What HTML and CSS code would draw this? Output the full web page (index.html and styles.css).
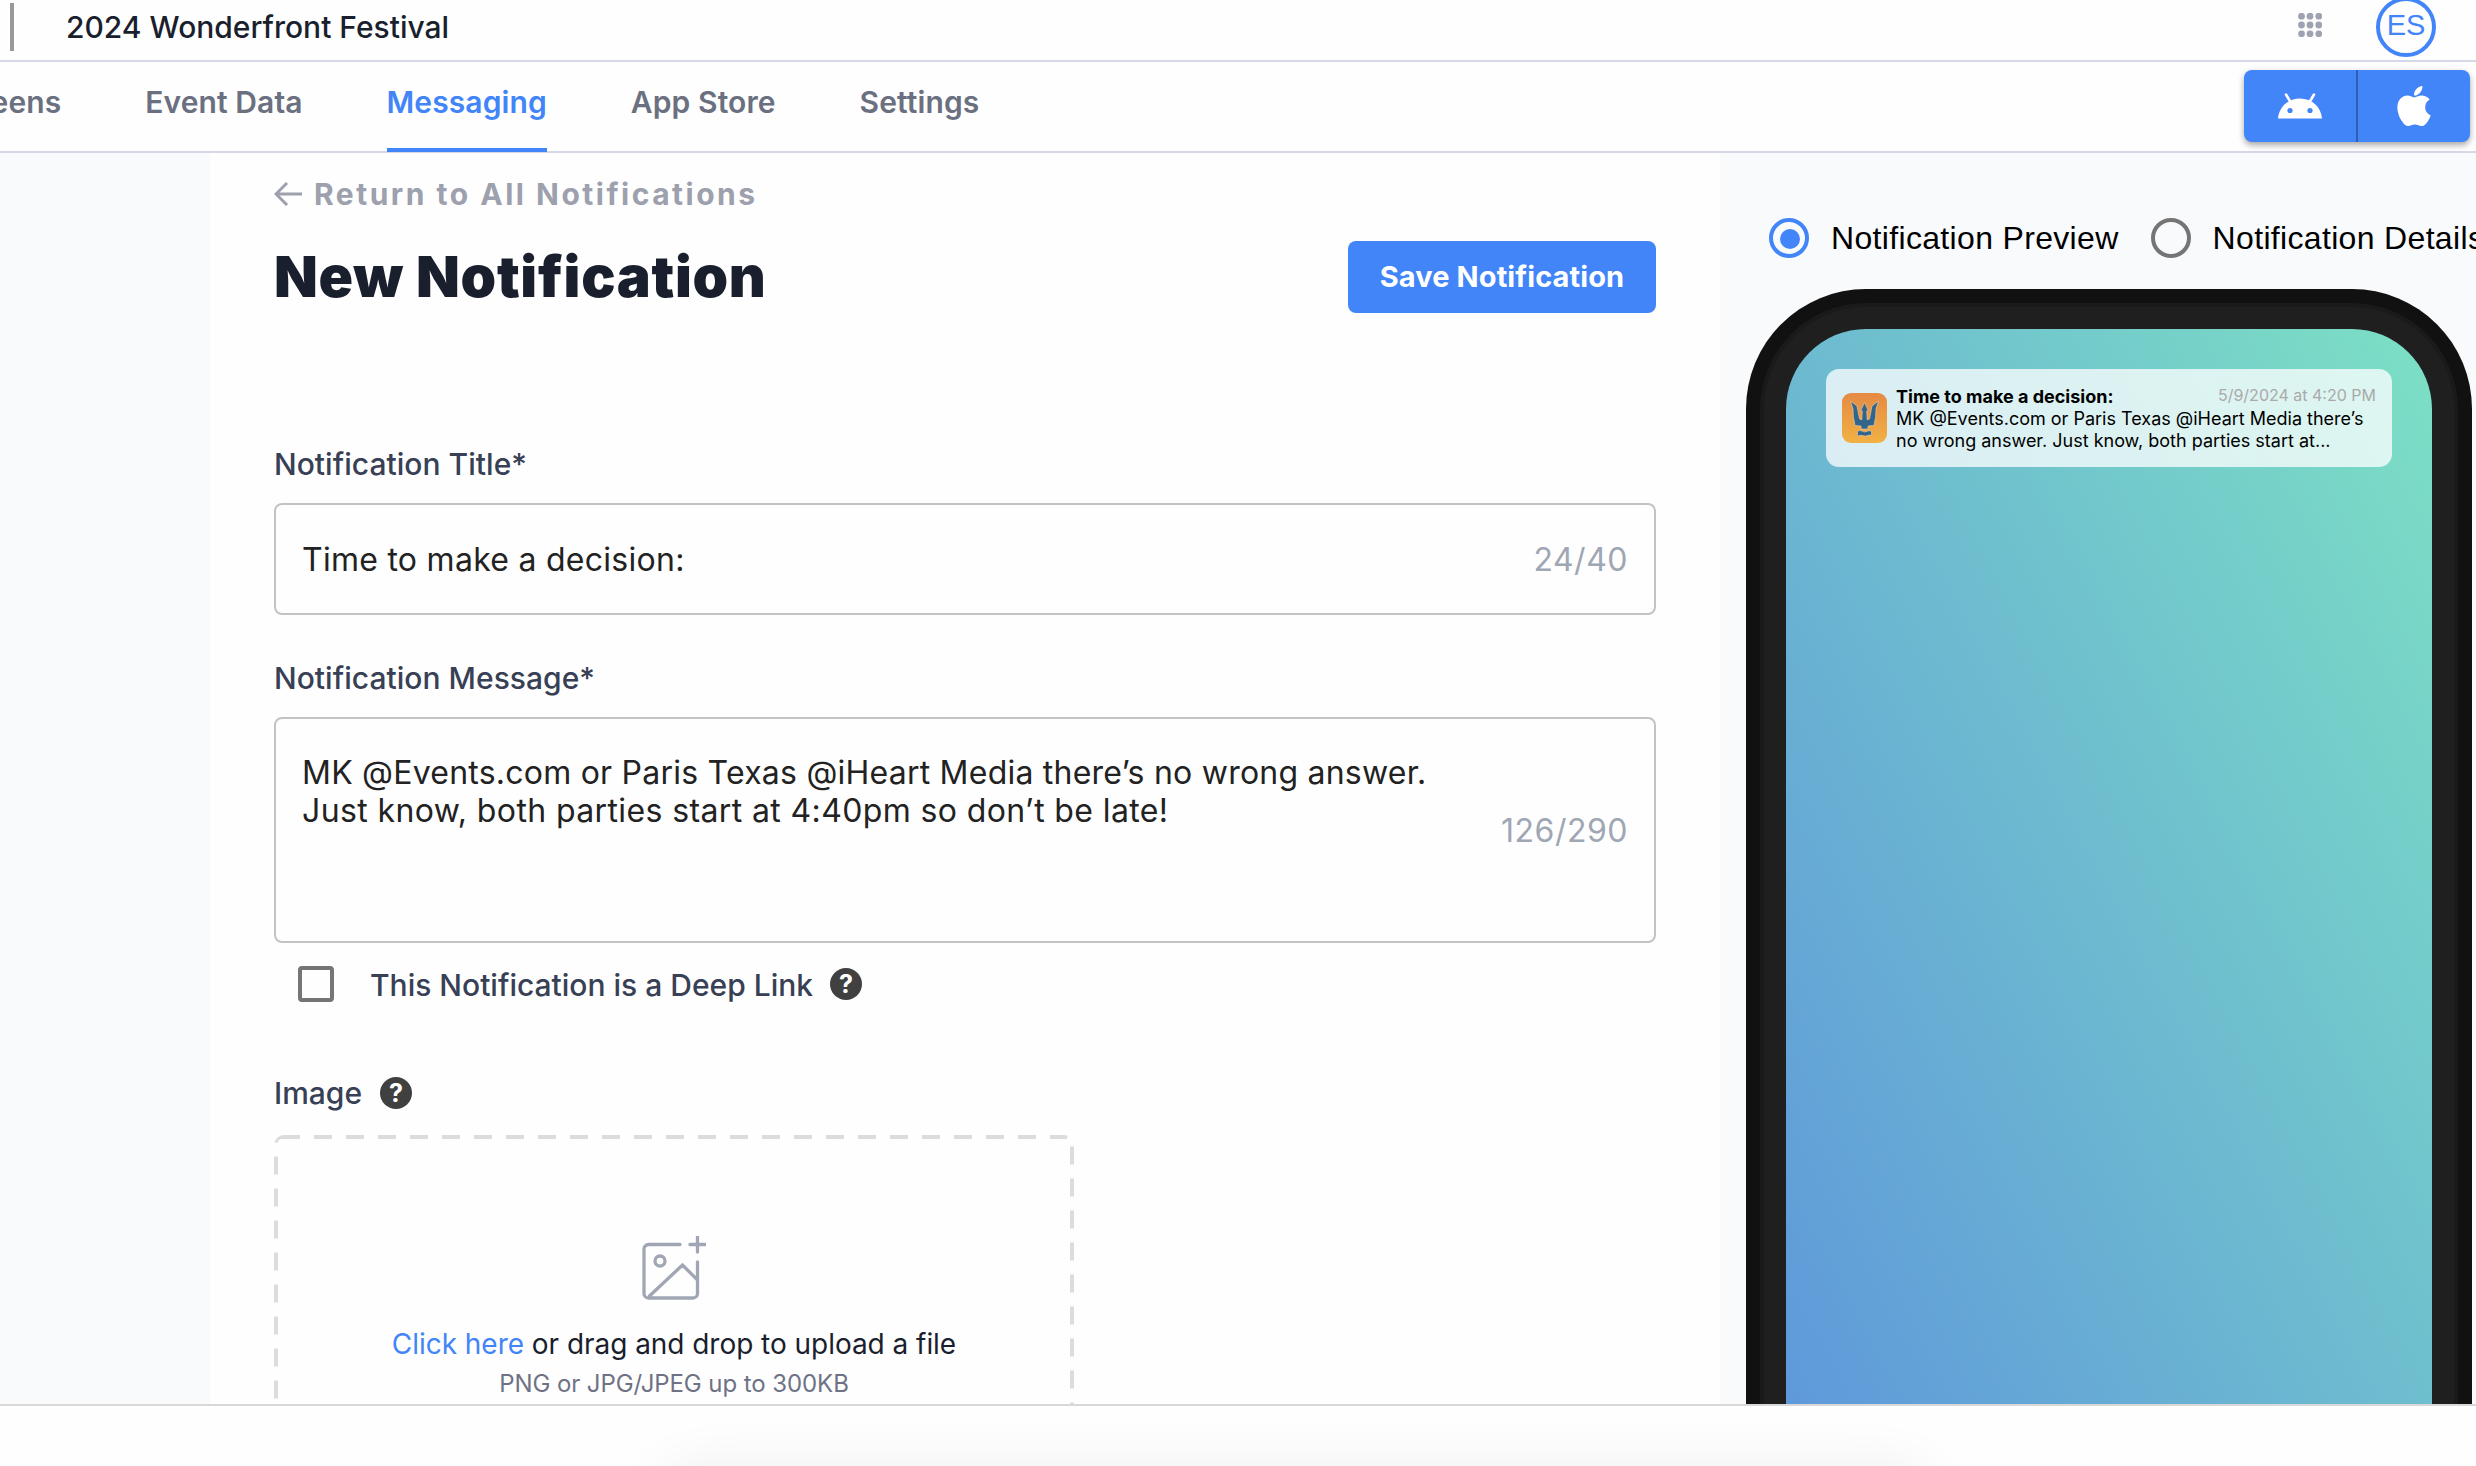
FILE: index.html
```html
<!DOCTYPE html>
<html lang="en">
<head>
    <meta charset="UTF-8">
    <meta name="viewport" content="width=device-width, initial-scale=1.0">
    <title>New Notification</title>
    <link rel="stylesheet" href="styles.css">
</head>
<body>

    <header class="topbar">
        <div class="event-name">2024 Wonderfront Festival</div>
        <div class="topbar-right">
            <svg class="apps-icon" viewBox="0 0 24 24">
                <circle cx="3.5" cy="3.2" r="3.4"/><circle cx="12" cy="3.2" r="3.4"/><circle cx="20.8" cy="3.2" r="3.4"/>
                <circle cx="3.5" cy="12" r="3.4"/><circle cx="12" cy="12" r="3.4"/><circle cx="20.8" cy="12" r="3.4"/>
                <circle cx="3.5" cy="20.8" r="3.4"/><circle cx="12" cy="20.8" r="3.4"/><circle cx="20.8" cy="20.8" r="3.4"/>
            </svg>
            <div class="avatar">ES</div>
        </div>
    </header>

    <nav class="tabs">
        <div class="tab-list">
            <a class="tab">Screens</a>
            <a class="tab">Event Data</a>
            <a class="tab active">Messaging</a>
            <a class="tab">App Store</a>
            <a class="tab">Settings</a>
        </div>
        <div class="platforms">
            <button class="platform">
                <svg class="android-icon" viewBox="0 0 44 26">
                    <path d="M8 1.5l5 8.500M36 1.500l-5 8.500" stroke="#fff" stroke-width="2.600" stroke-linecap="round"/>
                    <path d="M0 25.500C1 14 10 5.500 22 5.500S43 14 44 25.500z" fill="#fff"/>
                    <circle cx="12" cy="17.500" r="2.600" fill="#4285f8"/>
                    <circle cx="32" cy="17.500" r="2.600" fill="#4285f8"/>
                </svg>
            </button>
            <button class="platform">
                <svg class="apple-icon" viewBox="0 0 384 512" preserveAspectRatio="none">
                    <path fill="#fff" d="M318.700 268.700c-.2-36.700 16.400-64.400 50-84.800-18.800-26.900-47.200-41.700-84.700-44.600-35.500-2.800-74.300 20.700-88.500 20.700-15 0-49.400-19.700-76.400-19.700C63.300 141.200 4 184.800 4 273.500q0 39.300 14.400 81.200c12.800 36.700 59 126.700 107.200 125.200 25.200-.6 43-17.900 75.800-17.900 31.800 0 48.300 17.900 76.400 17.900 48.600-.7 90.400-82.500 102.600-119.300-65.200-30.700-61.700-90-61.700-91.900zm-56.600-164.200c27.300-32.400 24.800-61.900 24-72.500-24.100 1.400-52 16.400-67.900 34.900-17.500 19.800-27.800 44.300-25.600 71.900 26.100 2 49.900-11.400 69.500-34.300z"/>
                </svg>
            </button>
        </div>
    </nav>

    <main class="content">
        <section class="editor">
            <a class="back-link">
                <svg viewBox="0 0 28 24"><path d="M13 1L2 12l11 11M2 12h26"/></svg>
                <span>Return to All Notifications</span>
            </a>
            <div class="heading-row">
                <h1>New Notification</h1>
                <button class="save-button">Save Notification</button>
            </div>

            <label class="field-label">Notification Title*</label>
            <div class="field title-field">
                <span class="title-value">Time to make a decision:</span>
                <span class="counter">24/40</span>
            </div>

            <label class="field-label message-label">Notification Message*</label>
            <div class="field message-field">
                <div class="message-value">
                    <p class="message-line">MK @Events.com or Paris Texas @iHeart Media there’s no wrong answer.</p>
                    <p class="message-line wide">Just know, both parties start at 4:40pm so don’t be late!</p>
                </div>
                <span class="counter">126/290</span>
            </div>

            <div class="deep-link">
                <span class="checkbox"></span>
                <span class="deep-link-label">This Notification is a Deep Link</span>
                <span class="help">?</span>
            </div>

            <div class="image-label">
                <span>Image</span>
                <span class="help">?</span>
            </div>
            <div class="dropzone">
                <svg class="dropzone-border"><rect width="100%" height="100%" rx="8"/></svg>
                <svg class="upload-icon" viewBox="0 0 64 64">
                    <path d="M38 8.500H6.500A4.500 4.500 0 0 0 2 13v44.500A4.500 4.500 0 0 0 6.500 62H51a4.500 4.500 0 0 0 4.500-4.500V26M7.500 60L40.500 29l15 15M48 8.500h15M55.500 1v15"/>
                    <circle cx="18" cy="25" r="5"/>
                </svg>
                <p class="drop-text"><a>Click here</a> or drag and drop to upload a file</p>
                <p class="drop-hint">PNG or JPG/JPEG up to 300KB</p>
            </div>
        </section>

        <aside class="preview">
            <div class="preview-options">
                <span class="radio checked"></span>
                <span class="radio-label">Notification Preview</span>
                <span class="radio"></span>
                <span class="radio-label">Notification Details</span>
            </div>
            <div class="phone">
                <div class="phone-ring">
                    <div class="phone-bezel">
                        <div class="phone-screen">
                            <div class="push">
                                <svg class="push-icon" viewBox="0 0 45 50">
                                    <defs>
                                        <linearGradient id="sunset" x1="0" y1="0" x2="0" y2="1">
                                            <stop offset="0" stop-color="#e58a44"/>
                                            <stop offset="1" stop-color="#f2b144"/>
                                        </linearGradient>
                                    </defs>
                                    <rect width="45" height="50" rx="9" fill="url(#sunset)"/>
                                    <path class="trident" d="M8.500 8L15 13l2.500 13 2.300.8.5-8.800-1.500-.5L22.500 9.500l3.700 8-1.500.5.5 8.800 2.300-.8L30 13l6.500-5-2.500 8-.3 7.500-1.700 9-6 .5V36h-7v-3l-6-.5-1.700-9-.3-7.500z"/>
                                    <path class="trident" d="M15.500 38.500c3-2.500 5 .8 8 .3 2-.5 4-2 6-.3v4c-3-1.500-4 1-7 .5-3-.5-4-1.500-7 .5z"/>
                                </svg>
                                <div class="push-body">
                                    <div class="push-head">
                                        <strong>Time to make a decision:</strong>
                                        <time>5/9/2024 at 4:20 PM</time>
                                    </div>
                                    <p>MK @Events.com or Paris Texas @iHeart Media there’s<br>no wrong answer. Just know, both parties start at...</p>
                                </div>
                            </div>
                        </div>
                    </div>
                </div>
            </div>
        </aside>
    </main>

    <footer class="footer"><div class="footer-shadow"></div></footer>

</body>
</html>
```
FILE: styles.css
```css
* {
    box-sizing: border-box;
}

body {
    margin: 0;
    height: 1466px;
    display: flex;
    flex-direction: column;
    overflow: hidden;
    background-color: #fefefe;
    font-family: Inter, "Liberation Sans", sans-serif;
    color: #1a1f2e;
}

p, h1 {
    margin: 0;
}

button {
    border: none;
    font-family: inherit;
}

/* Top bar */
.topbar {
    height: 62px;
    flex: none;
    display: flex;
    justify-content: space-between;
    align-items: flex-start;
    border-bottom: 2px solid #d5d9e5;
}

.event-name {
    height: 48px;
    margin: 3px 0 0 10px;
    padding-left: 52px;
    border-left: 4px solid #999;
    font-size: 30px;
    font-weight: 500;
    line-height: 48px;
}

.topbar-right {
    display: flex;
    align-items: flex-start;
    gap: 54px;
    margin-right: 40px;
}

.apps-icon {
    width: 24px;
    height: 24px;
    margin-top: 13px;
    fill: #9fa3b1;
}

.avatar {
    width: 60px;
    height: 60px;
    margin-top: -3px;
    border: 4px solid #4285f8;
    border-radius: 50%;
    color: #4285f8;
    font-family: "Liberation Sans", sans-serif;
    font-size: 29px;
    line-height: 49px;
    text-align: center;
}

/* Tabs */
.tabs {
    height: 91px;
    flex: none;
    display: flex;
    justify-content: space-between;
    border-bottom: 2px solid #d5d9e5;
}

.tab-list {
    display: flex;
    gap: 84px;
    margin-left: -58px;
}

.tab {
    height: 90px;
    padding-top: 22px;
    font-size: 30px;
    font-weight: 600;
    line-height: 36px;
    letter-spacing: 0.1px;
    color: #6b7080;
}

.tab.active {
    color: #4285f8;
    border-bottom: 4px solid #4285f8;
}

.platforms {
    display: flex;
    width: 226px;
    height: 72px;
    margin: 8px 6px 0 0;
    border-radius: 8px;
    background-color: #4285f8;
    box-shadow: 0 3px 6px rgba(0, 0, 0, 0.35);
}

.platform {
    flex: 1;
    padding: 0;
    display: flex;
    justify-content: center;
    align-items: center;
    background: none;
}

.platform:first-child {
    border-right: 2px solid #2f5fb3;
}

.android-icon {
    width: 44px;
    height: 26px;
}

.apple-icon {
    width: 34px;
    height: 46px;
}

/* Page content */
.content {
    height: 1251px;
    flex: none;
    display: flex;
    overflow: hidden;
    background-color: #f9fafc;
}

.editor {
    width: 1510px;
    flex: none;
    margin-left: 210px;
    padding: 22px 64px 0;
    background-color: #fefefe;
}

.back-link {
    display: flex;
    align-items: center;
    gap: 12px;
    height: 38px;
    color: #9da0ad;
    font-size: 30px;
    font-weight: 700;
    letter-spacing: 2.5px;
}

.back-link svg {
    width: 28px;
    height: 24px;
    fill: none;
    stroke: #9da0ad;
    stroke-width: 3;
}

.heading-row {
    display: flex;
    justify-content: space-between;
    align-items: center;
    height: 72px;
    margin-top: 28px;
}

h1 {
    padding-bottom: 2px;
    font-size: 57px;
    font-weight: 900;
    letter-spacing: 0.7px;
}

.save-button {
    width: 308px;
    height: 72px;
    padding: 0 0 2px;
    border-radius: 8px;
    background-color: #4285f8;
    color: #fff;
    font-size: 29px;
    font-weight: 700;
    letter-spacing: 0.1px;
}

.field-label {
    display: block;
    height: 36px;
    margin: 133px 0 21px;
    font-size: 30px;
    font-weight: 500;
    line-height: 36px;
    letter-spacing: 0.03px;
    color: #374054;
}

.message-label {
    margin-top: 45px;
}

.field {
    display: flex;
    justify-content: space-between;
    align-items: center;
    padding: 0 26px;
    border: 2px solid #c3c3c3;
    border-radius: 8px;
    color: #222;
    font-size: 32px;
    letter-spacing: 0.27px;
}

.title-field {
    height: 112px;
}

.message-field {
    height: 226px;
}

.message-value {
    align-self: flex-start;
    margin-top: 35px;
    line-height: 38px;
}

.message-line {
    letter-spacing: 0.23px;
}

.message-line.wide {
    letter-spacing: 0.38px;
}

.counter {
    color: #9fa6b4;
    letter-spacing: 0.5px;
}

.deep-link {
    display: flex;
    align-items: center;
    height: 36px;
    margin: 23px 0 0 24px;
    font-size: 30px;
    font-weight: 500;
    color: #374054;
}

.checkbox {
    width: 36px;
    height: 36px;
    margin-right: 36px;
    border: 4px solid #757575;
    border-radius: 4px;
}

.deep-link-label {
    margin-right: 17px;
    padding-top: 2px;
}

.help {
    width: 32px;
    height: 32px;
    border-radius: 50%;
    background-color: #404040;
    color: #fff;
    font-size: 25px;
    font-weight: 700;
    line-height: 32px;
    text-align: center;
}

.image-label {
    display: flex;
    align-items: center;
    gap: 18px;
    height: 36px;
    margin-top: 73px;
    font-size: 30px;
    font-weight: 500;
    color: #374054;
}

/* Upload area */
.dropzone {
    position: relative;
    display: flex;
    flex-direction: column;
    align-items: center;
    width: 800px;
    height: 301px;
    margin-top: 24px;
    padding-top: 101px;
}

.dropzone-border {
    position: absolute;
    inset: 0;
    width: 100%;
    height: 100%;
    border-radius: 10px;
    overflow: hidden;
}

.dropzone-border rect {
    fill: none;
    stroke: #dcdcdc;
    stroke-width: 8;
    stroke-dasharray: 18 14;
}

.upload-icon {
    width: 64px;
    height: 64px;
    fill: none;
    stroke: #a0a6b3;
    stroke-width: 3.3;
    stroke-linecap: round;
}

.drop-text {
    margin-top: 27px;
    font-size: 28px;
    line-height: 34px;
    letter-spacing: -0.04px;
}

.drop-text a {
    color: #4285f8;
}

.drop-hint {
    margin-top: 8px;
    font-size: 24px;
    line-height: 30px;
    letter-spacing: -0.08px;
    color: #6f7285;
}

/* Preview column */
.preview {
    flex: 1;
    min-width: 0;
    padding: 65px 0 0 26px;
}

.preview-options {
    display: flex;
    align-items: center;
    height: 40px;
    padding-left: 23px;
    color: #000;
    font-family: "Liberation Sans", sans-serif;
    font-size: 32px;
    letter-spacing: 0.33px;
    white-space: nowrap;
}

.radio {
    display: flex;
    flex: none;
    width: 40px;
    height: 40px;
    margin-right: 22px;
    border: 4px solid #757575;
    border-radius: 50%;
}

.radio.checked {
    padding: 7px 5px 5px 7px;
    border-color: #4285f8;
}

.radio.checked::after {
    content: "";
    flex: 1;
    border-radius: 50%;
    background-color: #4285f8;
}

.radio-label {
    margin-right: 32px;
}

.phone {
    width: 726px;
    height: 1300px;
    margin-top: 31px;
    padding: 14px;
    border-radius: 120px;
    background-color: #111;
}

.phone-ring {
    height: 100%;
    padding: 4px;
    border-radius: 106px;
    background-color: #1a1a1a;
}

.phone-bezel {
    height: 100%;
    padding: 22px;
    border-radius: 102px;
    background-color: #1f1f1f;
}

.phone-screen {
    height: 100%;
    padding: 40px;
    border-radius: 80px;
    background: linear-gradient(to top right, #5d94dc, #7ce0c4);
}

.push {
    display: flex;
    height: 98px;
    padding: 17px 16px 0;
    gap: 9px;
    border-radius: 13px;
    background-color: rgba(255, 255, 255, 0.75);
    color: #000;
    font-size: 18px;
    line-height: 22px;
}

.push-icon {
    flex: none;
    width: 45px;
    height: 50px;
    margin-top: 7px;
}

.trident {
    fill: #33658a;
    stroke: #e8d3b0;
    stroke-width: 0.6;
}

.push-body {
    flex: 1;
    white-space: nowrap;
}

.push-head {
    display: flex;
    justify-content: space-between;
    height: 22px;
}

.push-head time {
    color: #a9a9a9;
    font-size: 16px;
    line-height: 18px;
}

/* Footer */
.footer {
    flex: 1;
    border-top: 2px solid #d8d8d8;
    overflow: hidden;
}

.footer-shadow {
    width: 1260px;
    height: 40px;
    margin: 68px 0 0 665px;
    border-radius: 20px;
    box-shadow: 0 0 60px rgba(0, 0, 0, 0.09);
}
```
